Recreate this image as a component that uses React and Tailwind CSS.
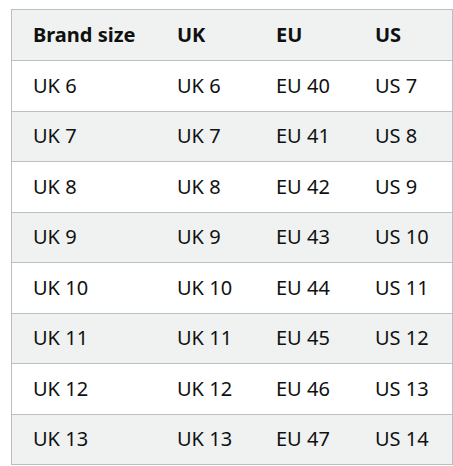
const HEAD = ['Brand size', 'UK', 'EU', 'US'];
const ROWS = [6, 7, 8, 9, 10, 11, 12, 13].map((n, i) => [`UK ${n}`, `UK ${n}`, `EU ${40 + i}`, `US ${n + 1}`]);

export default function App() {
  return (
    <div className="pt-[9px] pl-[11px] bg-white min-h-[466px]" style={{ fontFamily: '"Noto Sans", "Open Sans", sans-serif' }}>
      <div className="w-[442px] border border-[#bbbfbf] text-[#0f1111] text-[20px]">
        <div className="grid grid-cols-[143px_99px_99px_99px] h-[50px] items-center bg-[#f0f2f2] font-bold">
          {HEAD.map((h, i) => (
            <div key={i} className={i === 0 ? 'pl-[21px]' : 'pl-[22px]'}>{h}</div>
          ))}
        </div>
        {ROWS.map((r, ri) => (
          <div
            key={ri}
            className={`grid grid-cols-[143px_99px_99px_99px] h-[50.5px] items-center border-t border-[#bbbfbf] ${ri % 2 ? 'bg-[#f0f2f2]' : 'bg-white'}`}
          >
            {r.map((c, i) => (
              <div key={i} className={i === 0 ? 'pl-[21px]' : 'pl-[22px]'}>{c}</div>
            ))}
          </div>
        ))}
      </div>
    </div>
  );
}
